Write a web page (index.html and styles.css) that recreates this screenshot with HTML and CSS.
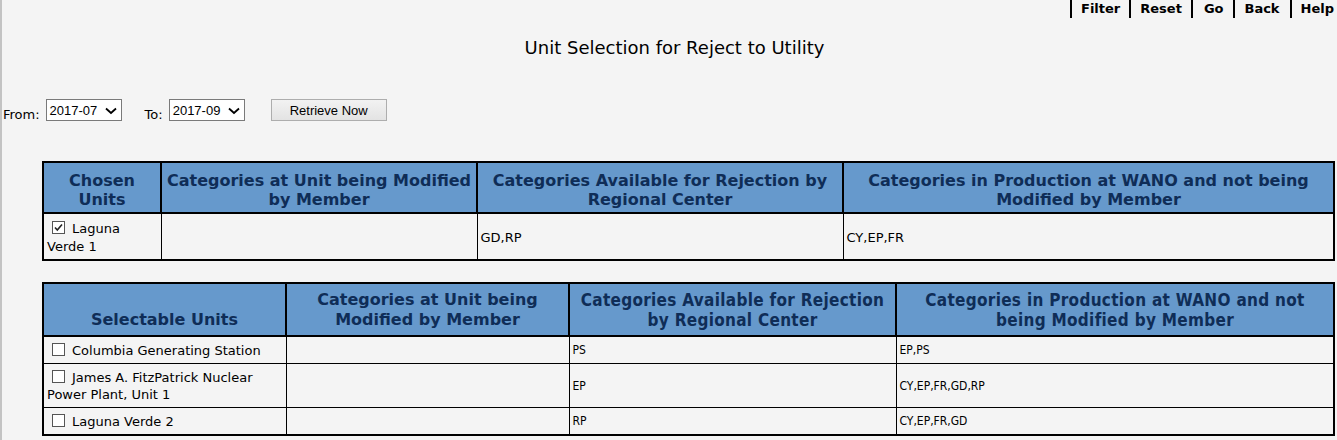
FILE: index.html
```html
<!DOCTYPE html>
<html>
<head>
<meta charset="utf-8">
<link rel="stylesheet" href="styles.css">
</head>
<body>
<div class="page">
  <nav class="topnav">
    <a class="nav-item">Filter</a>
    <a class="nav-item">Reset</a>
    <a class="nav-item nav-go">Go</a>
    <a class="nav-item nav-back">Back</a>
    <a class="nav-item">Help</a>
  </nav>
  <h1 class="title">Unit Selection for Reject to Utility</h1>
  <div class="filters">
    <label class="lbl">From:</label>
    <span class="sel"><span class="sel-val">2017-07</span><svg class="chev" width="12" height="8" viewBox="0 0 12 8"><path d="M1 1.5 L6 6 L11 1.5" fill="none" stroke="#000" stroke-width="1.8"/></svg></span>
    <label class="lbl lbl-to">To:</label>
    <span class="sel"><span class="sel-val">2017-09</span><svg class="chev" width="12" height="8" viewBox="0 0 12 8"><path d="M1 1.5 L6 6 L11 1.5" fill="none" stroke="#000" stroke-width="1.8"/></svg></span>
    <button class="btn">Retrieve Now</button>
  </div>

  <table class="grid grid1">
    <colgroup><col class="c1a"><col class="c1b"><col class="c1c"><col class="c1d"></colgroup>
    <tr>
      <th>Chosen Units</th>
      <th>Categories at Unit being Modified by Member</th>
      <th>Categories Available for Rejection by Regional Center</th>
      <th>Categories in Production at WANO and not being Modified by Member</th>
    </tr>
    <tr>
      <td><span class="cb"><svg width="11" height="11" viewBox="0 0 11 11"><path d="M2 5.5 L4.3 8 L9 2.5" fill="none" stroke="#222" stroke-width="1.6"/></svg></span>Laguna Verde 1</td>
      <td></td>
      <td>GD,RP</td>
      <td>CY,EP,FR</td>
    </tr>
  </table>

  <table class="grid grid2">
    <colgroup><col class="c2a"><col class="c2b"><col class="c2c"><col class="c2d"></colgroup>
    <tr>
      <th>Selectable Units</th>
      <th>Categories at Unit being Modified by Member</th>
      <th class="narrow">Categories Available for Rejection by Regional Center</th>
      <th class="narrow">Categories in Production at WANO and not being Modified by Member</th>
    </tr>
    <tr>
      <td><span class="cb"></span>Columbia Generating Station</td>
      <td></td>
      <td class="narrow">PS</td>
      <td class="narrow">EP,PS</td>
    </tr>
    <tr>
      <td><span class="cb"></span>James A. FitzPatrick Nuclear Power Plant, Unit 1</td>
      <td></td>
      <td class="narrow">EP</td>
      <td class="narrow">CY,EP,FR,GD,RP</td>
    </tr>
    <tr>
      <td><span class="cb"></span>Laguna Verde 2</td>
      <td></td>
      <td class="narrow">RP</td>
      <td class="narrow">CY,EP,FR,GD</td>
    </tr>
  </table>
</div>
</body>
</html>
```

FILE: styles.css
```css
html, body {
  margin: 0;
  padding: 0;
  background: #f4f4f4;
}
body {
  font-family: "DejaVu Sans", Verdana, sans-serif;
  font-size: 13px;
  color: #000;
}
.page {
  border-left: 2px solid #c3c3c3;
  min-height: 440px;
  box-sizing: border-box;
}
.topnav {
  display: flex;
  justify-content: flex-end;
  height: 18px;
}
.nav-item {
  font-weight: bold;
  font-size: 13px;
  line-height: 17px;
  padding: 0 9px;
  border-left: 2px solid #000;
  color: #000;
}
.nav-go {
  padding: 0 10px 0 11px;
}
.nav-back {
  padding: 0 10px 0 9px;
}
.nav-item:last-child {
  padding-right: 3px;
}
.title {
  margin: 19px 0 0 0;
  text-align: center;
  font-weight: normal;
  font-size: 18px;
  line-height: 21px;
  padding-left: 10px;
}
.filters {
  display: flex;
  align-items: flex-end;
  margin-top: 41px;
  padding-left: 1px;
  height: 22px;
}
.lbl {
  font-size: 13px;
  line-height: 15px;
  margin-right: 6px;
  margin-bottom: -1px;
}
.lbl-to {
  margin-left: 23px;
  margin-right: 6px;
}
.sel {
  position: relative;
  display: inline-flex;
  align-items: center;
  width: 76px;
  height: 22px;
  box-sizing: border-box;
  border: 1px solid #7a7a7a;
  background: #fff;
  font-family: "Liberation Sans", Arial, sans-serif;
  font-size: 13px;
  padding-left: 3px;
}
.chev {
  position: absolute;
  right: 4px;
  top: 7px;
}
.btn {
  margin-left: 26px;
  width: 116px;
  height: 22px;
  border: 1px solid #adadad;
  background: linear-gradient(#f2f2f2, #e3e3e3);
  font-family: "Liberation Sans", Arial, sans-serif;
  font-size: 13px;
  color: #000;
  padding: 0;
}
.grid {
  border-collapse: collapse;
  table-layout: fixed;
  width: 1291px;
  margin-left: 40px;
  border: 2px solid #000;
}
.grid1 { margin-top: 40px; }
.grid2 { margin-top: 21px; }
.c1a { width: 118px; }
.c1b { width: 316px; }
.c1c { width: 366px; }
.c1d { width: 491px; }
.c2a { width: 243px; }
.c2b { width: 283px; }
.c2c { width: 327px; }
.c2d { width: 438px; }
th {
  background: #6699cc;
  color: #0f2d57;
  font-size: 16px;
  font-weight: bold;
  line-height: 19px;
  border: 2px solid #000;
  padding: 8px 4px 3px 4px;
  text-align: center;
  vertical-align: top;
}
.grid2 th {
  vertical-align: bottom;
  padding: 6px 4px 5px 4px;
  line-height: 20px;
}
td {
  border: 1px solid #000;
  padding: 5px 3px 4px 3px;
  line-height: 17px;
  vertical-align: middle;
  font-size: 13px;
}
.grid1 td {
  padding: 6px 3px 3px 3px;
  line-height: 18px;
}
.cb {
  display: inline-block;
  width: 13px;
  height: 13px;
  box-sizing: border-box;
  border: 1px solid #555;
  background: #fff;
  vertical-align: -1px;
  margin: 0 7px 0 5px;
}
.cb svg {
  display: block;
}
.narrow {
  font-family: "DejaVu Sans Condensed", "DejaVu Sans", sans-serif;
}
.grid2 th.narrow {
  font-size: 17px;
  letter-spacing: 0.3px;
}
.grid2 td.narrow {
  font-size: 12px;
}
```
